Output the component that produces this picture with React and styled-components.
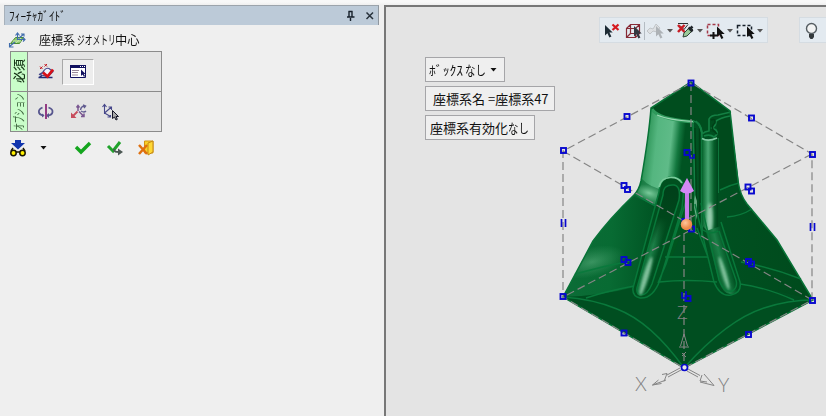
import React from "react";
import styled, { createGlobalStyle } from "styled-components";

const Global = createGlobalStyle`
  * { box-sizing: border-box; }
  body { margin: 0; background: #efefef; overflow: hidden; }
  svg { display: block; flex: none; }
`;

const Window = styled.div`
  width: 826px;
  height: 416px;
  display: grid;
  grid-template-columns: 383px 1fr;
  padding-top: 5px;
  background: linear-gradient(#f8f8f8 0 2px, #efefef 5px);
  color: #111;
  font-family: "Noto Sans CJK JP", sans-serif;
  font-size: 12px;
`;

const Panel = styled.aside`
  padding-left: 4px;
  display: flex;
  flex-direction: column;
`;

const PanelHeader = styled.header`
  width: 375px;
  height: 20px;
  display: flex;
  align-items: center;
  justify-content: space-between;
  padding: 0 4px;
  background: #bccad8;
  border-top: 1px solid #9ca4ac;
  border-left: 1px solid #a7b1bb;
  border-right: 1px solid #8f979f;
`;

const HeaderButtons = styled.div`
  display: flex;
  gap: 10px;
`;

const Fit = styled.span`
  display: inline-block;
  width: ${(p) => p.$w}px;
  white-space: pre;
  transform: scaleX(${(p) => p.$scale});
  transform-origin: 0 50%;
`;

const FeatureTitle = styled.div`
  height: 26px;
  display: flex;
  align-items: center;
  gap: 13px;
  padding: 3px 0 0 4px;
  line-height: 20px;
`;

const TitleText = styled.span`
  display: flex;
  font-size: 12.5px;
`;

const ToolBox = styled.section`
  width: 152px;
  height: 81px;
  margin-left: 6px;
  display: grid;
  grid-template: 40px 39px / 17px 1fr;
  background: #e4e4e4;
  border: 1px solid #8b8b8b;
`;

const GroupTab = styled.div`
  display: flex;
  align-items: center;
  justify-content: center;
  min-height: 0;
  background: #c9fdc9;
  border-right: 1px solid #8b8b8b;
  border-bottom: ${(p) => (p.$last ? 0 : 1)}px solid #8b8b8b;
  overflow: hidden;
`;

const TabText = styled.span`
  writing-mode: vertical-rl;
  text-orientation: sideways;
  transform: rotate(180deg) scaleY(${(p) => p.$scale || 1});
  white-space: nowrap;
  line-height: 16px;
  font-size: ${(p) => p.$size}px;
  font-weight: ${(p) => p.$weight || 400};
  color: ${(p) => p.$color};
`;

const ToolRow = styled.div`
  display: flex;
  align-items: center;
  padding-left: 2px;
  border-bottom: ${(p) => (p.$last ? 0 : 1)}px solid #8b8b8b;
`;

const ToolButton = styled.button`
  width: 32px;
  height: 26px;
  padding: 0;
  display: flex;
  align-items: center;
  justify-content: center;
  background: ${(p) => (p.$pressed ? "#ededed" : "transparent")};
  border: 1px solid;
  border-color: ${(p) => (p.$pressed ? "#a8a8a8 #fff #fff #a8a8a8" : "transparent")};
`;

const Actions = styled.div`
  height: 32px;
  display: flex;
  align-items: center;
  padding-left: 5px;
`;

const ActionButton = styled.button`
  width: ${(p) => p.$w}px;
  height: 22px;
  display: flex;
  align-items: center;
  padding: 0;
  border: 0;
  background: none;
`;

const Viewport = styled.main`
  position: relative;
  border-left: 2px solid #777;
  border-top: 2px solid #777;
  margin-left: 1px;
  background: #e4e4e4;
  overflow: hidden;
`;

const Scene = styled.svg`
  position: absolute;
  inset: 0;
`;

const ToolStrip = styled.div`
  position: absolute;
  left: ${(p) => p.$left}px;
  top: 10px;
  width: ${(p) => p.$w}px;
  height: 26px;
  display: flex;
  align-items: center;
  background: #e3eaf0;
  border: 1px solid #d5dce2;
`;

const FloatingOptions = styled.div`
  position: absolute;
  left: 39px;
  top: 50px;
  display: flex;
  flex-direction: column;
  align-items: flex-start;
  gap: 4px;
`;

const OptionBox = styled.div`
  width: ${(p) => p.$w}px;
  height: 25px;
  padding-left: ${(p) => p.$pad}px;
  display: flex;
  align-items: center;
  background: #efefef;
  border: 1px solid #a5a5a8;
  font-size: 13px;
  line-height: 22px;
  white-space: pre;
`;

function Icon({ box, children }) {
  const [, , w, h] = box.split(" ");
  return (
    <svg width={w} height={h} viewBox={box} fill="none">
      {children}
    </svg>
  );
}

const Cursor = ({ x, y, fill = "#111" }) => (
  <path d={`M${x} ${y}v10.500l2.400-2.300 2 4.300 2-1-2-4h3.300z`} fill={fill} />
);

const Caret = ({ x, y, color = "#555" }) => (
  <path d={`M${x} ${y}h6l-3 3.4z`} fill={color} />
);

const PlaneIcon = () => (
  <Icon box="8 30 18 18">
    <path d="M10.500 42.500l5-6h8l-4 6z" fill="#8fc96f" stroke="#4b8d35" />
    <path d="M13 40h8M16 42l5-5" stroke="#c5e4a9" />
    <path d="M17.500 39V32m-2 2.500l2-2.500 2 2.500M17 38.500h8m-2-2l2 2-2 2M15 41l-5.500 4.500m0-3.500v4h4M19 37l5-4m-3 0h3v2.500" stroke="#3f6cac" strokeWidth="1.100" />
  </Icon>
);

const SketchCheckIcon = () => (
  <Icon box="37 63 18 18">
    <path d="M39 74.500q4-1 5-4 2-3 5-2l4 3-5 5z" fill="#f3f5ff" stroke="#46478a" strokeWidth="1.200" />
    <path d="M38.500 77.500h14M42 75.500l-3 2" stroke="#222b77" strokeWidth="1.500" />
    <path d="M43 72.500l4.500 4 5.500-7" stroke="#d71018" strokeWidth="2.800" />
    <path d="M40 66.500l2.500 2.500m0-2.500l-2.500 2.500M44.500 64l2.500 2.500m0-2.500l-2.500 2.500" stroke="#c31922" />
  </Icon>
);

const DialogIcon = () => (
  <Icon box="69 63 18 17">
    <path d="M70.500 65.500h15v12h-15z" fill="#fff" stroke="#10105f" />
    <path d="M70 65h16v3H70z" fill="#10105f" />
    <path d="M80 66.500h1m1 0h1m1 0h1" stroke="#fff" />
    <path d="M72 70.500h7m-7 2h6m-6 2.500h6" stroke="#998899" />
    <path d="M81 69.500v6.500l1.600-1.500 1.400 2.500 1-1-1.200-2h1.800z" fill="#10105f" />
  </Icon>
);

const RotateIcon = () => (
  <Icon box="37 104 18 18">
    <path d="M42.500 108.500c-5 2-5 7 1 8M48.500 108.500c6 2 5 7.500-1 8" stroke="#57568e" strokeWidth="1.800" />
    <path d="M49 114l-3 2.500 3 2.500zM42 114.500l2.500 2-2.500 2z" fill="#57568e" />
    <path d="M46 105v15" stroke="#943b83" strokeWidth="2" />
  </Icon>
);

const AxesFlipIcon = () => (
  <Icon box="69 104 18 18">
    <path d="M77.500 112.500l-5 5" stroke="#c74c5c" strokeWidth="1.800" />
    <path d="M71 113.500v5.500h5.500z" fill="#c74c5c" />
    <path d="M78 112v-5.500m-1.500 2l1.500-2 1.500 2M79 112.500l5 5m-3 0h3v-3" stroke="#7a5791" strokeWidth="1.500" />
    <path d="M85 107q-4 0-4.500 4M83 106l2.500 1-1.500 2M81 112q3 2 5 0" stroke="#625d91" strokeWidth="1.400" />
  </Icon>
);

const AxesPickIcon = () => (
  <Icon box="100 104 18 18">
    <path d="M103.500 115v-9m-2 2l2-2.500 2 2.500M103.500 114l7-6m-3 0h3v3M103.500 114l6 3.500m-3 .5h3v-2" stroke="#46478a" strokeWidth="1.100" />
    <path d="M111.500 111.500v8l2-1.500 1.500 3 1.300-.700-1.300-2.800h2.500z" fill="#aaa" stroke="#151526" />
  </Icon>
);

const GlassesIcon = () => (
  <Icon box="9 139 18 18">
    <path d="M15 140h6v3h4l-7 6.500-7-6.500h4z" fill="#1235ad" />
    <circle cx="13.500" cy="153" r="2.700" fill="#fff000" stroke="#181500" strokeWidth="1.500" />
    <circle cx="22.500" cy="153" r="2.700" fill="#fff000" stroke="#181500" strokeWidth="1.500" />
    <path d="M16 152h4M11 151l2-3m12 3l-2-3" stroke="#181500" strokeWidth="1.400" />
  </Icon>
);

const ApplyIcon = () => (
  <Icon box="74 139 18 18">
    <path d="M76 147l5 5 9-9" stroke="#14a51e" strokeWidth="3.400" />
  </Icon>
);

const ApplyNextIcon = () => (
  <Icon box="106 139 18 18">
    <path d="M108 146l5 5 7-9" stroke="#20a32b" strokeWidth="3" />
    <path d="M114 149c0 3 2 3 5 3" stroke="#4c5854" strokeWidth="2" />
    <path d="M118 148.500v7l5-3.500z" fill="#4c5854" />
  </Icon>
);

const ExitIcon = () => (
  <Icon box="137 139 18 18">
    <path d="M144.500 141h8.500v12h-8.500z" fill="#f8d12a" stroke="#d29412" />
    <path d="M148 143l5-2v11l-5 3z" fill="#ffd834" stroke="#c58914" />
    <path d="M139 145l8 9m0-9l-8 9" stroke="#df7010" strokeWidth="2.500" />
  </Icon>
);

const Handle = ({ x, y }) => (
  <rect x={x - 2.5} y={y - 2.5} width="5" height="5" stroke="#0808ce" strokeWidth="1.9" fill="none" />
);

const handles = [
  [691, 83], [627, 116.5], [751.5, 118], [563.5, 150.5], [812.5, 154.5],
  [624, 185.5], [627.5, 189.5], [748, 187], [751.5, 191],
  [687, 152.5], [691.5, 229], [685, 221.5],
  [624, 259.5], [628, 262.5], [748.5, 261.5], [751.5, 264],
  [563, 296.5], [812.5, 300.5], [624, 333], [748.5, 334.5],
  [688, 298.5],
];

const HULL =
  "M691 82L651 108Q649 135 641 181Q639 190 634 195Q609 219 593 241L563 297L684 368L813 300L777 240L747 204Q740 195 738 181L730 111Z";
const BOX_LINES =
  "M691 83V230M691 83L563 151V297L684 368L812 300V154ZM563 151L684 221L812 154M684 221V368M691 230L563 297M691 230L812 300";

function ModelScene() {
  return (
    <Scene width="440" height="409" viewBox="386 7 440 409" fill="none">
      <defs>
        <clipPath id="hull"><path d={HULL} /></clipPath>
        <linearGradient id="barrel" gradientUnits="userSpaceOnUse" x1="644" y1="0" x2="699" y2="6">
          <stop offset="0" stopColor="#05652f" />
          <stop offset=".2" stopColor="#15803f" />
          <stop offset=".5" stopColor="#55b680" />
          <stop offset=".76" stopColor="#5fbb88" />
          <stop offset=".9" stopColor="#13783f" />
          <stop offset="1" stopColor="#005322" />
        </linearGradient>
        <linearGradient id="pin" x1="0" x2="1">
          <stop offset="0" stopColor="#04632b" />
          <stop offset=".38" stopColor="#48a873" />
          <stop offset=".75" stopColor="#065e2a" />
          <stop offset="1" stopColor="#00451c" />
        </linearGradient>
        <linearGradient id="skirt" gradientUnits="userSpaceOnUse" x1="575" y1="250" x2="800" y2="260">
          <stop offset="0" stopColor="#0b6c36" />
          <stop offset=".16" stopColor="#086b33" />
          <stop offset=".35" stopColor="#005423" />
          <stop offset="1" stopColor="#004b1d" />
        </linearGradient>
        <radialGradient id="sheen">
          <stop offset="0" stopColor="#7bcb9c" />
          <stop offset="1" stopColor="#63bd88" stopOpacity="0" />
        </radialGradient>
        <linearGradient id="legLeft" gradientUnits="userSpaceOnUse" x1="638" y1="267" x2="658" y2="273">
          <stop offset="0" stopColor="#00501f" />
          <stop offset=".4" stopColor="#1c8048" />
          <stop offset=".75" stopColor="#005021" />
        </linearGradient>
        <linearGradient id="legShade" gradientUnits="userSpaceOnUse" x1="668" y1="190" x2="655" y2="245">
          <stop offset="0" stopColor="#00411a" />
          <stop offset=".5" stopColor="#00471b" />
          <stop offset="1" stopColor="#00471b" stopOpacity="0" />
        </linearGradient>
        <linearGradient id="legRight" gradientUnits="userSpaceOnUse" x1="711" y1="269" x2="734" y2="263">
          <stop offset="0" stopColor="#00501f" />
          <stop offset=".5" stopColor="#1c8048" />
          <stop offset=".85" stopColor="#005021" />
        </linearGradient>
        <radialGradient id="ball" cx=".4" cy=".35">
          <stop offset="0" stopColor="#ffc69b" />
          <stop offset="1" stopColor="#ee8a4b" />
        </radialGradient>
      </defs>

      <path d={HULL} fill="url(#skirt)" />
      <g clipPath="url(#hull)">
        <ellipse cx="592" cy="262" rx="34" ry="15" fill="url(#sheen)" opacity=".42" transform="rotate(-14 592 262)" />
        <path d="M563 297Q600 296 635 287Q684 277 740 285Q775 289 813 300L684 368Z" fill="#004e20" />
        <path d="M651 109Q653 118 694 122L697 219L659 207L635 194Q641 180 645 158Z" fill="url(#barrel)" />
        <path d="M641 178Q650 188 665 190L659 207L632 196z" fill="#0b6a35" opacity=".6" />
        <ellipse cx="649" cy="193" rx="16" ry="8" fill="url(#sheen)" transform="rotate(16 649 193)" />
        <path d="M684 188L697 192V240L682 232L670 262L665 240z" fill="#00551f" />
      </g>
      <path d="M635 194Q648 203 658 207" stroke="#0b7d40" strokeWidth="1.500" />
      <path d="M691 82L651 108Q655 116 671 119Q687 122 696 121L703 132L714 132L717 122L731 112Z" fill="#004d1e" />
      <path d="M717 122L730 113L739 184L720 191Z" fill="#004a1c" />
      <path d="M652 109Q657 119 694 122" stroke="#2f9a5c" strokeWidth="3" />
      <path d="M657 115Q668 120 693 121.500" stroke="#9cd9b5" strokeWidth="1.100" />
      <path d="M693 124L696 232M698 123Q702 126 702 137V237M718 138V193" stroke="#128044" strokeWidth="1.600" />
      <path d="M695 128L697 231M699.500 128V235" stroke="#003f17" strokeWidth="1.300" />
      <path d="M702 137Q709 143 718 138V228Q716 234 708 232L702 225Z" fill="url(#pin)" />
      <path d="M693 121Q699 122 701 130Q702 135 705 132L709 131Q709 123 709 119Q711 115 718 115L731 112" stroke="#148044" strokeWidth="1.600" />
      <path d="M696 121Q701 126 702 133M704 136Q710 134 714 137Q719 134 716 130L712 128Q716 126 716 121Q720 118 730 116" stroke="#148044" strokeWidth="1.700" />
      <path d="M711 120Q716 118 715 123Q711 126 713 130L717 134" stroke="#003f17" strokeWidth="1.500" />
      <path d="M702 138.500Q708 142 717 138" stroke="#81c9a2" strokeWidth="1.700" />
      <ellipse cx="710" cy="218" rx="3" ry="15" fill="#b2ddc4" opacity=".8" filter="blur(1.6px)" />
      <path d="M695 212Q693 204 695 195L697 201V220z" fill="#7ebc97" opacity=".8" />

      <path d="M633 288L659 192Q660 178 671 178Q683 178 684 188L681 208L657 286Q652 300 640 298Q632 296 633 288Z" fill="#00501f" />
      <path d="M637 288L663 195Q663 184 674 185Q681 186 679 200L651 286Q645 298 637 294Z" fill="url(#legLeft)" />
      <path d="M660 204L663 195Q663 184 674 185Q681 186 679 200L664 247H648Z" fill="url(#legShade)" />
      <path d="M633 288L659 192Q660 178 671 177Q683 177 684 188L682 208L660 280Q653 299 640 298Q632 296 633 288ZM637 288L663 195Q663 184 674 185Q681 186 679 200L652 284Q647 296 640 295Q636 293 637 288M687 198L666 264L658 283" stroke="#08783a" strokeWidth="1.500" />
      <path d="M659 187Q661 178 670 177.500Q678 177 682 183" stroke="#7bcb9c" strokeWidth="1.700" />
      <ellipse cx="646" cy="276" rx="2.600" ry="20" fill="#9bd3b2" opacity=".8" transform="rotate(17 646 276)" filter="blur(1.3px)" />

      <path d="M699 205L719 282Q724 296 733 294Q741 291 739 282L721 226L706 231Z" fill="url(#legRight)" />
      <path d="M695 204L714 282Q720 297 731 295Q742 293 740 282L721 222M701 203L719 280Q724 293 732 291Q738 288 736 280L719 231M697 228L708 257M703 230Q710 235 718 231" stroke="#08783a" strokeWidth="1.500" />
      <ellipse cx="724" cy="273" rx="2.300" ry="17" fill="#9bd3b2" opacity=".75" transform="rotate(-17 724 273)" filter="blur(1.3px)" />

      <path d="M720 190Q730 185 739 183M727 217Q741 216 752 209M575 274Q604 266 635 260M665 257H708M741 262Q773 268 801 279M586 298Q607 291 634 286M659 282Q687 279 717 282M740 284Q765 287 794 300M563 297Q593 299 617 309Q651 322 684 368M684 368Q727 320 764 308Q788 300 813 300" stroke="#0a793c" strokeWidth="1.400" />
      <path d={HULL} stroke="#087337" strokeWidth="1.500" />

      <path d={BOX_LINES} stroke="#858585" strokeWidth="1.200" strokeDasharray="8 4" />
      {handles.map(([x, y]) => <Handle key={`${x},${y}`} x={x} y={y} />)}
      <path d="M561.500 219v8M565.500 219v8M810.500 223v8M814.500 223v8M690 155v3h4v-4M682 292v6h4v-7" stroke="#0808ce" strokeWidth="1.700" />
      <circle cx="684.500" cy="367.500" r="3" fill="#e4e4e4" stroke="#0808ce" strokeWidth="1.700" />

      <path d="M687 221V190" stroke="#c77bea" strokeWidth="4.200" />
      <path d="M687 178L680 191Q687 196 694 191Z" fill="#d389f5" />
      <circle cx="686.500" cy="224.500" r="5.700" fill="url(#ball)" />

      <g stroke="#858585" strokeWidth="1">
        <path d="M680.500 346L684 334L687.500 346M679 347h10M682 356l4-4M682 353l4 4" />
        <path d="M681 370L668 377M680 368L667 375M662 374.500l5-1-3 8M666 380L652.500 385M652.500 385l6-5M652.500 385l9-1.500" />
        <path d="M688 369L700 375.500M687 371L698 377M702 375l-2 6 7 1M704 374L714 385.500L700 382" />
      </g>
      <g fill="#808080" fontFamily="Lato, sans-serif" fontWeight="300" fontSize="19">
        <text x="635" y="391">X</text>
        <text x="718" y="392">Y</text>
        <text x="677" y="319" fontSize="18">Z</text>
      </g>
    </Scene>
  );
}

function SelectionStrip() {
  return (
    <ToolStrip $left={213} $w={169}>
      <Icon box="600 18 166 24">
        <Cursor x={605} y={25} fill="#1d2b35" />
        <path d="M612.500 24.500l6 5.500m0-5.500l-6 5.500" stroke="#d51a20" strokeWidth="2.200" />
        <path d="M626.500 28.500l4-4h9v9l-4 4h-9zM626.500 28.500h9v9m0-9l4-4M630.500 25v8.500h9M630.500 33.500l-4 4" stroke="#872a36" strokeWidth="1.200" />
        <Cursor x={634} y={26} fill="#343840" />
        <path d="M644.500 22v18" stroke="#b4bcc3" />
        <path d="M647 31l3-3 3 1 3-5 4 4-3 4-4-1-3 3z" stroke="#c1c5c8" fill="#dde0e3" />
        <Cursor x={656} y={26} fill="#adb2b6" />
        <Caret x={667} y={29} />
        <path d="M678 23.500h10m-8 2l4 4 4-5" stroke="#2d3031" />
        <path d="M678 25l6.500 7m0-7l-6.500 7" stroke="#c81c24" strokeWidth="2.500" />
        <path d="M690 27l-6 6-1 4 4-1 6-6z" fill="#9ac999" stroke="#304234" />
        <path d="M688.500 27.500l4 4m-2-3l2-2" stroke="#20252a" strokeWidth="2.500" />
        <Caret x={697} y={29} />
        <path d="M707.500 24.500h11v11h-11z" stroke="#a43a49" strokeWidth="1.500" strokeDasharray="3 2" />
        <path d="M713.500 32v7m-3.500-3.500h7" stroke="#111" strokeWidth="2" />
        <Cursor x={717} y={26.5} />
        <Caret x={727} y={29} />
        <path d="M737.500 25.500h14v10h-14z" stroke="#17202b" strokeWidth="1.500" strokeDasharray="3 2" />
        <Cursor x={747} y={26.5} />
        <Caret x={757} y={29} />
      </Icon>
    </ToolStrip>
  );
}

export default function App() {
  return (
    <>
      <Global />
      <Window>
        <Panel>
          <PanelHeader>
            <Fit $w={60} $scale={0.95}>ﾌｨｰﾁｬｶﾞｲﾄﾞ</Fit>
            <HeaderButtons>
              <Icon box="348 9 9 12">
                <path d="M350.500 10.500h4M351 10v6M354 10v6M349 16h7.500M352.500 17v3" stroke="#17212b" strokeWidth="1.400" />
              </Icon>
              <Icon box="365 9 9 12">
                <path d="M366.500 11.500l6.500 6.500m0-6.500l-6.500 6.500" stroke="#27313b" strokeWidth="1.500" />
              </Icon>
            </HeaderButtons>
          </PanelHeader>
          <FeatureTitle>
            <PlaneIcon />
            <TitleText>
              <Fit $w={38} $scale={0.96}>座標系</Fit>
              <Fit $w={38} $scale={0.62}>ジオメトリ</Fit>
              <Fit $w={24} $scale={0.98}>中心</Fit>
            </TitleText>
          </FeatureTitle>
          <ToolBox>
            <GroupTab><TabText $size={12} $weight={500} $color="#163316">必須</TabText></GroupTab>
            <ToolRow>
              <ToolButton><SketchCheckIcon /></ToolButton>
              <ToolButton $pressed><DialogIcon /></ToolButton>
            </ToolRow>
            <GroupTab $last><TabText $size={12} $scale={0.62} $color="#3d663d">オプション</TabText></GroupTab>
            <ToolRow $last>
              <ToolButton><RotateIcon /></ToolButton>
              <ToolButton><AxesFlipIcon /></ToolButton>
              <ToolButton><AxesPickIcon /></ToolButton>
            </ToolRow>
          </ToolBox>
          <Actions>
            <ActionButton $w={31}><GlassesIcon /></ActionButton>
            <ActionButton $w={34}>
              <Icon box="40 145 8 6"><Caret x={40.5} y={146} color="#111" /></Icon>
            </ActionButton>
            <ActionButton $w={32}><ApplyIcon /></ActionButton>
            <ActionButton $w={31}><ApplyNextIcon /></ActionButton>
            <ActionButton $w={18}><ExitIcon /></ActionButton>
          </Actions>
        </Panel>
        <Viewport>
          <ModelScene />
          <SelectionStrip />
          <ToolStrip $left={413} $w={40}>
            <Icon box="800 18 26 24">
              <circle cx="811.500" cy="28.500" r="5" stroke="#555d62" strokeWidth="1.400" fill="#f2f3f3" />
              <path d="M809 34h5v3l-1.500 2h-2L809 37z" fill="#33393c" />
            </Icon>
          </ToolStrip>
          <FloatingOptions>
            <OptionBox $w={80} $pad={3}>
              <Fit $w={36} $scale={1.05}>ﾎﾞｯｸｽ</Fit>
              <Fit $w={25} $scale={0.8}>なし</Fit>
              <Icon box="490 66 8 6"><Caret x={490.5} y={67} color="#111" /></Icon>
            </OptionBox>
            <OptionBox $w={130} $pad={7}>座標系名 =座標系47</OptionBox>
            <OptionBox $w={110} $pad={4}>
              <Fit $w={78} $scale={1}>座標系有効化</Fit>
              <Fit $w={24} $scale={0.8}>なし</Fit>
            </OptionBox>
          </FloatingOptions>
        </Viewport>
      </Window>
    </>
  );
}
